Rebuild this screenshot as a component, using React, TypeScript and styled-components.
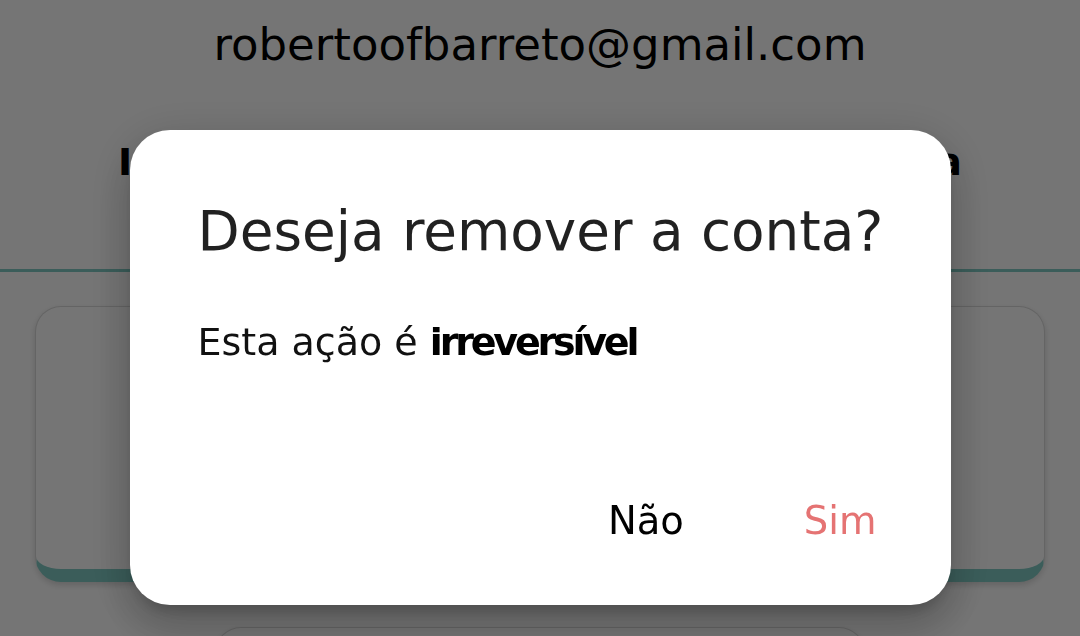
import React from "react";
import styled, { createGlobalStyle } from "styled-components";

const GlobalStyle = createGlobalStyle`
  html, body {
    margin: 0;
    padding: 0;
    background: #ffffff;
    font-family: "DejaVu Sans", "Noto Sans", sans-serif;
  }
`;

const Page = styled.div`
  width: 1080px;
  height: 636px;
  overflow: hidden;
  background: #ffffff;
  display: flex;
  flex-direction: column;
  align-items: center;
`;

const Email = styled.div`
  padding-top: 19px;
  font-size: 45px;
  line-height: 52px;
  color: #000000;
`;

const Tabs = styled.div`
  align-self: stretch;
  display: flex;
  justify-content: space-between;
  padding: 68px 118px 84px;
  border-bottom: 3px solid #80cbc4;
`;

const TabLabel = styled.span`
  font-size: 38px;
  line-height: 46px;
  font-weight: bold;
  color: #000000;
`;

const Card = styled.div<{ $width: number; $height: number; $top: number }>`
  box-sizing: border-box;
  margin-top: ${(p) => p.$top}px;
  width: ${(p) => p.$width}px;
  height: ${(p) => p.$height}px;
  flex-shrink: 0;
  border: 1px solid rgba(0, 0, 0, 0.14);
  border-bottom: 13px solid #80cbc4;
  border-radius: 26px;
  background: #ffffff;
  box-shadow: 0 3px 6px rgba(0, 0, 0, 0.16);
`;

const Overlay = styled.div`
  position: fixed;
  inset: 0;
  background: rgba(0, 0, 0, 0.54);
  display: flex;
  justify-content: center;
  align-items: flex-start;
  padding-top: 130px;
  box-sizing: border-box;
`;

const Dialog = styled.div`
  box-sizing: border-box;
  width: 821px;
  height: 475px;
  background: #ffffff;
  border-radius: 40px;
  padding: 69px 74px 62px 68px;
  display: flex;
  flex-direction: column;
  box-shadow: 0 11px 15px -7px rgba(0, 0, 0, 0.2),
    0 24px 38px 3px rgba(0, 0, 0, 0.14), 0 9px 46px 8px rgba(0, 0, 0, 0.12);
`;

const Title = styled.h2`
  margin: 0;
  font-size: 54.8px;
  line-height: 64px;
  font-weight: normal;
  color: rgba(0, 0, 0, 0.87);
  white-space: nowrap;
`;

const Message = styled.p`
  margin: 56px 0 0;
  font-size: 38px;
  line-height: 46px;
  color: #111111;
  white-space: nowrap;

  strong {
    letter-spacing: -3.2px;
    color: #000000;
  }
`;

const Actions = styled.div`
  margin-top: auto;
  display: flex;
  justify-content: flex-end;
  gap: 120px;
`;

const ActionButton = styled.button<{ $danger?: boolean }>`
  border: none;
  background: none;
  padding: 0;
  font-family: inherit;
  font-size: 38.5px;
  line-height: 44px;
  color: ${(p) => (p.$danger ? "#e57373" : "#000000")};
  cursor: pointer;
`;

export default function App() {
  return (
    <>
      <GlobalStyle />
      <Page>
        <Email>robertoofbarreto@gmail.com</Email>
        <Tabs>
          <TabLabel>Informações</TabLabel>
          <TabLabel>Conta</TabLabel>
        </Tabs>
        <Card $width={1010} $height={276} $top={34} />
        <Card $width={650} $height={120} $top={45} />
      </Page>
      <Overlay>
        <Dialog role="dialog">
          <Title>Deseja remover a conta?</Title>
          <Message>
            Esta ação é <strong>irreversível</strong>
          </Message>
          <Actions>
            <ActionButton>Não</ActionButton>
            <ActionButton $danger>Sim</ActionButton>
          </Actions>
        </Dialog>
      </Overlay>
    </>
  );
}
